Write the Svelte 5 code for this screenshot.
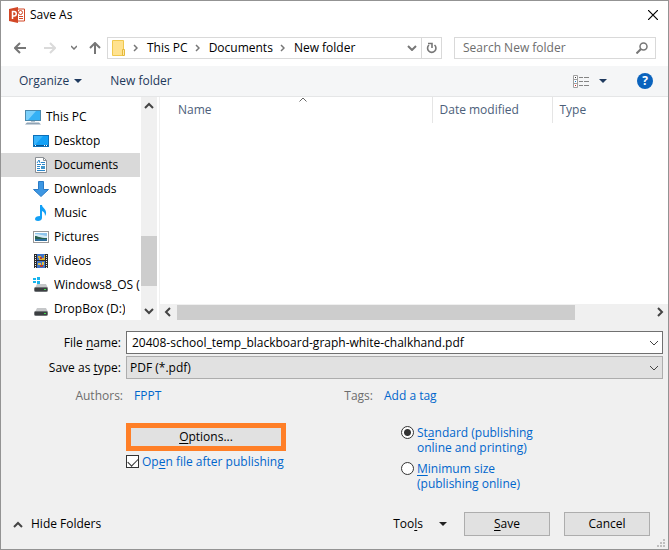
<script>
  const crumbs = ['This PC', 'Documents', 'New folder'];
  const places = [
    { name: 'This PC', icon: 'pc', root: true },
    { name: 'Desktop', icon: 'desktop' },
    { name: 'Documents', icon: 'documents' },
    { name: 'Downloads', icon: 'downloads' },
    { name: 'Music', icon: 'music' },
    { name: 'Pictures', icon: 'pictures' },
    { name: 'Videos', icon: 'videos' },
    { name: 'Windows8_OS (C:)', icon: 'osdrive' },
    { name: 'DropBox (D:)', icon: 'drive' }
  ];
  let selected = $state('Documents');
  let fileName = $state('20408-school_temp_blackboard-graph-white-chalkhand.pdf');
  let openAfter = $state(true);
  let quality = $state('standard');
</script>

{#snippet chevron(dir, weight = 1)}
  <svg class="chev {dir}" width="10" height="10" viewBox="0 0 10 10" aria-hidden="true">
    <path d="M1 3l4 4 4-4" fill="none" stroke="currentColor" stroke-width={weight} />
  </svg>
{/snippet}

{#snippet placeIcon(kind)}
  <svg width="16" height="16" viewBox="0 0 16 16" aria-hidden="true">
    {#if kind === 'pc'}
      <rect x=".5" y="1.5" width="15" height="10" fill="#35b1f5" stroke="#4b89ad" />
      <path d="M1 2h10L3 11H1z" fill="#7bd0fb" />
      <path d="M6 12h4v1H6z" fill="#b4c3ce" />
      <path d="M2 13.500h12l2 2H0z" fill="#8fa3b5" />
    {:else if kind === 'desktop'}
      <rect x=".5" y="2.500" width="15" height="11" fill="#12a0f6" stroke="#0b6fb8" />
      <path d="M1 3h9L2 12H1z" fill="#39b4fb" />
      <path d="M1 12h14v1H1z" fill="#07538f" />
      <path d="M2 12h1v1H2zM11 12h1v1h-1zM13 12h1v1h-1z" fill="#fff" />
    {:else if kind === 'documents'}
      <path d="M2.500.500h8l3 3v12h-11z" fill="#fff" stroke="#8a8f94" />
      <path d="M10.500.500v3h3" fill="none" stroke="#8a8f94" />
      <path d="M4 6l2-3 1 3M8 5.500h4M4 7.500h4M9 7.500h3M4 9.500h3M4 11.500h3M4 13.500h8" fill="none" stroke="#2c87ca" />
      <path d="M8 9h4v3H8z" fill="#4396cb" />
    {:else if kind === 'downloads'}
      <path d="M5.500.500h5v8h5L8 15.500.500 8.500h5z" fill="#3d97e3" stroke="#2a7bc6" />
    {:else if kind === 'music'}
      <path d="M7 0h2c0 3 5 4 4 9l-1 2c0-3-1-4-3-5v7c0 2-2 3-4 3s-3-1-3-2c0-2 2-3 5-3z" fill="#12a0f6" />
    {:else if kind === 'pictures'}
      <rect x=".5" y="2.500" width="15" height="11" fill="#fff" stroke="#999" />
      <path d="M2 4h12v8H2z" fill="#8fc5ec" />
      <path d="M2 5c4 0 6 1 12 2v2H2z" fill="#d4eaf5" />
      <path d="M2 7c3 0 4 2 12 2v1H2z" fill="#28614f" />
      <path d="M2 10h12v2H2z" fill="#2f6e9c" />
    {:else if kind === 'videos'}
      <path d="M1 1h14v14H1z" fill="#2c2c2c" />
      <path d="M4 1h8v6H4zM4 8h8v7H4z" fill="#3f74c8" />
      <path d="M5 3h3v2h3V2h1v5H6V5H5z" fill="#d9ae35" />
      <path d="M7 4h2v2H7zM7 12h3v2H7z" fill="#b43a32" />
      <path d="M5 10h3v2H5zM9 9h2v3H9z" fill="#e0bd42" />
      <path d="M2.500 2v13M13.500 2v13" stroke="#eee" stroke-dasharray="1 1" />
    {:else}
      {#if kind === 'osdrive'}
        <path d="M0 1h3v2H0zM4 0h3v3H4zM0 4h3v2H0zM4 4h3v3H4z" fill="#18b4ee" />
      {/if}
      <path d="M4 7h9l2 4H2z" fill="#c5c7c9" />
      <rect x="1.500" y="10.500" width="13" height="4" rx="1" fill="#3c3f42" stroke="#6f7376" />
      <path d="M11 12h2v1h-2z" fill="#3be04a" />
    {/if}
  </svg>
{/snippet}

<main class="dialog">
  <header class="title">
    <svg width="16" height="16" viewBox="0 0 16 16" aria-hidden="true">
      <path d="M8 2h7.500v12H8z" fill="#fff" stroke="#d24726" />
      <path d="M10 11.500h4M10 9.500h4" stroke="#d24726" />
      <circle cx="11.500" cy="5.500" r="2" fill="none" stroke="#d24726" />
      <path d="M0 2l9-2v16l-9-2z" fill="#d24726" />
      <path d="M3.500 12V4.500h1.500a2 2 0 0 1 0 4.500H3.500" fill="none" stroke="#fff" stroke-width="1.500" />
    </svg>
    <h1>Save As</h1>
    <button class="plain close" aria-label="Close">
      <svg width="10" height="10" viewBox="0 0 10 10"><path d="M0 0l10 10M10 0L0 10" stroke="#000" stroke-width="1.200" /></svg>
    </button>
  </header>

  <nav class="nav" aria-label="Location">
    <button class="plain" aria-label="Back">
      <svg width="12" height="12" viewBox="0 0 12 12"><path d="M12 6H1M6 1L1 6l5 5" fill="none" stroke="#767676" stroke-width="2" /></svg>
    </button>
    <button class="plain forward" aria-label="Forward" disabled>
      <svg width="12" height="12" viewBox="0 0 12 12"><path d="M0 6h11M6 1l5 5-5 5" fill="none" stroke="#dadada" stroke-width="2" /></svg>
    </button>
    <button class="plain recent" aria-label="Recent locations">
      <svg width="6" height="5" viewBox="0 0 6 5"><path d="M0 1l3 3 3-3" fill="none" stroke="#777" stroke-width="1.500" /></svg>
    </button>
    <button class="plain up" aria-label="Up">
      <svg width="12" height="12" viewBox="0 0 12 12"><path d="M6 12V1M1 6l5-5 5 5" fill="none" stroke="#767676" stroke-width="2" /></svg>
    </button>
    <div class="address">
      <svg width="13" height="16" viewBox="0 0 13 16" aria-hidden="true">
        <path d="M.500.500h11v15H.500z" fill="#ffe28f" stroke="#f0c84e" />
        <path d="M10.500 9.500h2v6h-2z" fill="#ffe9a8" stroke="#e5b93a" />
      </svg>
      {#each crumbs as crumb}
        <svg class="sep" width="5" height="8" viewBox="0 0 5 8" aria-hidden="true"><path d="M1 1l3 3-3 3" fill="none" stroke="#777" stroke-width="1.500" /></svg>
        <button class="plain">{crumb}</button>
      {/each}
      <button class="plain drop" aria-label="Previous locations">
        <svg width="10" height="6" viewBox="0 0 10 6"><path d="M1 1l4 4 4-4" fill="none" stroke="#777" stroke-width="2" /></svg>
      </button>
      <button class="plain refresh" aria-label="Refresh">
        <svg width="12" height="12" viewBox="0 0 12 12"><path d="M8.500 3a4.200 4.200 0 1 1-5.500 0" fill="none" stroke="#777" stroke-width="1.600" /><path d="M2 1.500h4V6" fill="none" stroke="#777" stroke-width="1.600" /></svg>
      </button>
    </div>
    <div class="search">
      <input type="search" aria-label="Search New folder" placeholder="Search New folder" />
      <svg width="12" height="12" viewBox="0 0 12 12" aria-hidden="true"><circle cx="7.500" cy="4.500" r="3.500" fill="none" stroke="#777" stroke-width="1.500" /><path d="M5 7l-4.500 4.500" stroke="#777" stroke-width="2" /></svg>
    </div>
  </nav>

  <div class="toolbar">
    <button class="plain">Organize <i class="tri"></i></button>
    <button class="plain">New folder</button>
    <button class="plain view" aria-label="Change view">
      <svg width="17" height="13" viewBox="0 0 17 13">
        <path d="M.500.500h4v12h-4zM.500 4.500h4M.500 8.500h4" fill="#fff" stroke="#a0a0a0" />
        <path d="M2 2h1v1H2z" fill="#333" /><path d="M2 6h1v1H2z" fill="#1683d8" /><path d="M2 10h1v1H2z" fill="#d02020" />
        <path d="M6 2.500h4m1 0h5M6 6.500h4m1 0h5M6 10.500h4m1 0h5" stroke="#858585" />
      </svg>
      <i class="tri"></i>
    </button>
    <button class="plain help" aria-label="Help">?</button>
  </div>

  <div class="browser">
    <div class="tree">
      <ul>
        {#each places as place}
          <li>
            <button class="plain place" class:root={place.root} class:selected={selected === place.name} onclick={() => (selected = place.name)}>
              {@render placeIcon(place.icon)}
              <span>{place.name}</span>
            </button>
          </li>
        {/each}
      </ul>
    </div>
    <div class="vbar" aria-hidden="true">
      {@render chevron('to-top', 2)}
      <i class="thumb"></i>
      {@render chevron('to-bottom', 2)}
    </div>
    <div class="files">
      <table>
        <thead>
          <tr>
            <th class="name" aria-sort="ascending">Name<svg width="8" height="5" viewBox="0 0 8 5" aria-hidden="true"><path d="M.500 4.500L4 1l3.500 3.500" fill="none" stroke="#666" /></svg></th>
            <th class="date">Date modified</th>
            <th>Type</th>
          </tr>
        </thead>
      </table>
      <div class="hbar" aria-hidden="true">
        {@render chevron('to-left', 2)}
        <div class="track"><i class="thumb"></i></div>
        {@render chevron('to-right', 2)}
      </div>
    </div>
  </div>

  <form class="details" onsubmit={(e) => e.preventDefault()}>
    <div class="fields">
      <label for="file">File <u>n</u>ame:</label>
      <div class="combo">
        <input id="file" type="text" bind:value={fileName} />
        {@render chevron('to-bottom')}
      </div>
      <label for="kind">Save as <u>t</u>ype:</label>
      <div class="combo grey">
        <select id="kind"><option>PDF (*.pdf)</option></select>
        {@render chevron('to-bottom')}
      </div>
    </div>

    <div class="meta">
      <span class="key">Authors:</span><button type="button" class="plain blue">FPPT</button>
      <span class="key">Tags:</span><button type="button" class="plain blue">Add a tag</button>
    </div>

    <div class="publish">
      <div class="output">
        <button type="button" class="options"><u>O</u>ptions...</button>
        <label class="choice"><input type="checkbox" bind:checked={openAfter} /><span>Op<u>e</u>n file after publishing</span></label>
      </div>
      <div class="quality">
        <label class="choice"><input type="radio" name="quality" value="standard" bind:group={quality} /><span>St<u>a</u>ndard (publishing<br />online and printing)</span></label>
        <label class="choice"><input type="radio" name="quality" value="minimum" bind:group={quality} /><span><u>M</u>inimum size<br />(publishing online)</span></label>
      </div>
    </div>

    <div class="actions">
      <button type="button" class="plain hide">
        <svg width="10" height="7" viewBox="0 0 10 7" aria-hidden="true"><path d="M1 6l4-4 4 4" fill="none" stroke="#444" stroke-width="2" /></svg>
        Hide Folders
      </button>
      <button type="button" class="plain tools"><span>Too<u>l</u>s</span> <i class="tri dark"></i></button>
      <button class="push"><span><u>S</u>ave</span></button>
      <button type="button" class="push">Cancel</button>
    </div>
    <svg class="grip" width="8" height="8" viewBox="0 0 8 8" aria-hidden="true"><path d="M6 0h2v2H6zM3 3h2v2H3zM6 3h2v2H6zM0 6h2v2H0zM3 6h2v2H3zM6 6h2v2H6z" fill="#bfbfbf" /></svg>
  </form>
</main>

<style>
  .dialog, .dialog * { box-sizing: border-box; }
  .dialog {
    display: flex;
    flex-direction: column;
    height: 100vh;
    min-height: 440px;
    border: 1px solid #939393;
    background: #fff;
    color: #000;
    font: 12px/16px "Open Sans", "Noto Sans", sans-serif;
  }
  button, input, select { font: inherit; color: inherit; margin: 0; }
  svg { display: block; flex: none; }
  i { display: block; }
  u { text-underline-offset: 2px; }
  .plain {
    display: flex;
    align-items: center;
    padding: 0;
    border: 0;
    background: none;
    white-space: nowrap;
  }
  .tri {
    border: 4px solid transparent;
    border-top-color: #1f3a5f;
    border-bottom: 0;
  }
  .tri.dark { border-top-color: #222; }
  .chev { color: #444; }
  .chev.to-top { transform: rotate(180deg); }
  .chev.to-left { transform: rotate(90deg); }
  .chev.to-right { transform: rotate(-90deg); }

  .title { display: flex; align-items: center; gap: 5px; height: 28px; padding: 0 10px 0 8px; }
  h1 { margin: 0; font: inherit; }
  .close { margin-left: auto; }

  .nav { display: flex; align-items: center; height: 37px; padding: 0 12px 0 13px; }
  .forward { margin-left: 18px; }
  .recent { margin-left: 15px; }
  .up { margin-left: 12px; }
  .address, .search { display: flex; align-items: center; height: 22px; border: 1px solid #d9d9d9; }
  .address { flex: 1; margin-left: 6px; padding-left: 4px; }
  .sep { margin: 0 9px 0 8px; }
  .address button + .sep { margin-left: 7px; }
  .drop { margin-left: auto; padding-right: 4px; }
  .refresh { height: 20px; padding: 0 3px 0 4px; border-left: 1px solid #d9d9d9; }
  .search { flex: 0 1 202px; margin-left: 12px; padding: 0 7px 0 8px; }
  .search input { flex: 1; min-width: 0; padding: 0; border: 0; background: none; outline: 0; appearance: none; }
  .search input::placeholder { color: #6d6d6d; opacity: 1; }

  .toolbar {
    display: flex;
    align-items: center;
    gap: 28px;
    height: 31px;
    padding: 0 15px 0 18px;
    border-bottom: 1px solid #e5e6e7;
    background: #f5f6f7;
    color: #1e395b;
  }
  .toolbar .plain { gap: 5px; }
  .toolbar .view { gap: 9px; margin-left: auto; }
  .toolbar .help {
    justify-content: center;
    width: 16px;
    height: 16px;
    margin-left: 2px;
    border-radius: 50%;
    background: #0a63bd;
    color: #fff;
    font-weight: 700;
  }

  .browser { display: flex; flex: 1; min-height: 100px; }
  .tree { width: 139px; overflow: hidden; }
  ul { margin: 0; padding: 8px 0 0; list-style: none; }
  .place.plain { width: 100%; height: 24px; gap: 5px; padding-left: 32px; }
  .place.plain.root { padding-left: 24px; }
  .place.plain.selected { background: #d9d9d9; }
  .place span { overflow: hidden; }
  .vbar {
    display: flex;
    flex-direction: column;
    align-items: center;
    width: 17px;
    margin-left: 1px;
    padding: 4px 0;
    border-right: 1px solid #fff;
    background: #f0f0f0;
  }
  .thumb { background: #cdcdcd; }
  .vbar .thumb { width: 100%; height: 50px; margin: auto 0 20px; }
  .files {
    display: flex;
    flex: 1;
    flex-direction: column;
    justify-content: space-between;
    min-width: 0;
    margin-left: 1px;
    border-left: 1px solid #f0f0f0;
  }
  table { width: 100%; border-collapse: collapse; table-layout: fixed; color: #4c607a; }
  th { height: 26px; padding: 0 0 0 7px; border-left: 1px solid #e5e5e5; font-weight: 400; text-align: left; }
  th.name { position: relative; width: 272px; padding-left: 18px; border-left: 0; }
  th.name svg { position: absolute; top: 0; left: 139px; }
  th.date { width: 120px; }
  .hbar { display: flex; align-items: center; height: 16px; padding: 0 3px; background: #f0f0f0; }
  .track { flex: 1; height: 15px; margin: 0 4px; }
  .hbar .thumb { width: 84%; height: 15px; }

  .details { position: relative; padding: 11px 5px 13px 12px; background: #f0f0f0; }
  .fields { display: grid; grid-template-columns: 108px 1fr; gap: 2px 5px; align-items: center; }
  .fields label { text-align: right; }
  .combo { display: grid; align-items: center; height: 23px; border: 1px solid #707070; background: #fff; }
  .combo.grey { border-color: #adadad; background: #e1e1e1; }
  .combo > :global(*) { grid-area: 1 / 1; }
  .combo input, .combo select {
    width: 100%;
    height: 21px;
    padding: 0 20px 0 5px;
    border: 0;
    outline: 0;
    background: none;
    appearance: none;
  }
  .combo select { padding-left: 3px; }
  .combo .chev { justify-self: end; margin-right: 3px; pointer-events: none; }

  .meta { display: grid; grid-template-columns: 110px 200px 28px 1fr; column-gap: 11px; align-items: center; height: 34px; }
  .key { display: flex; justify-content: flex-end; color: #6d6d6d; }
  .plain.blue, .choice { color: #0066cc; }

  .publish { display: flex; padding: 10px 0 0 113px; }
  .output { display: flex; flex-direction: column; gap: 3px; width: 275px; }
  .options { width: 160px; height: 28px; padding: 0; border: 5px solid #ff7f27; background: #e1e1e1; }
  .options, .push { line-height: 16px; }
  .quality { display: flex; flex-direction: column; gap: 6px; padding-top: 2px; }
  .choice { display: flex; gap: 3px; line-height: 15px; }
  .choice input {
    flex: none;
    width: 13px;
    height: 13px;
    margin-top: 1px;
    border: 1px solid #333;
    background: #fff;
    appearance: none;
  }
  .choice input[type="radio"] { border-radius: 50%; }
  .choice input[type="radio"]:checked { background: radial-gradient(circle, #333 0 3px, #fff 4px); }
  .choice input[type="checkbox"]:checked::before {
    content: "";
    display: block;
    width: 9px;
    height: 5px;
    margin: 2px 0 0 1px;
    border: solid #333;
    border-width: 0 0 1px 1px;
    transform: rotate(-45deg);
  }

  .actions { display: flex; align-items: center; margin-top: 21px; padding-right: 13px; }
  .plain.hide { gap: 8px; }
  .plain.tools { gap: 16px; margin: 0 17px 0 auto; }
  .push { width: 86px; height: 24px; padding: 0; border: 1px solid #adadad; background: #e1e1e1; }
  .push + .push { margin-left: 14px; }
  .grip { position: absolute; right: 3px; bottom: 2px; }
</style>
